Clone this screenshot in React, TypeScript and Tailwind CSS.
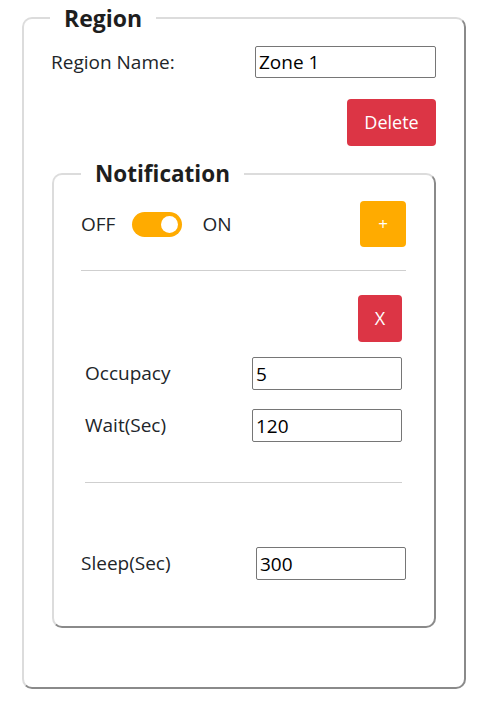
import { useState } from "react";

const font = { fontFamily: '"Open Sans", "Noto Sans", sans-serif' };

function TextBox({ value, className }: { value: string; className: string }) {
  return (
    <input
      defaultValue={value}
      className={`rounded-[2px] border border-[#767676] bg-white px-[3px] text-[19px] text-black outline-none ${className}`}
    />
  );
}

function Toggle() {
  const [on, setOn] = useState(true);
  return (
    <button
      onClick={() => setOn(!on)}
      className={`flex h-[25px] w-[50px] items-center rounded-full px-[4px] ${
        on ? "justify-end bg-[#ffab00]" : "justify-start bg-[#ccc]"
      }`}
    >
      <span className="h-[17px] w-[17px] rounded-full bg-white" />
    </button>
  );
}

export default function App() {
  return (
    <div className="min-h-[706px] bg-white text-[#212529]" style={font}>
      <fieldset className="ml-[22px] w-[444px] rounded-[10px] border-2 border-t-[#dcdcdc] border-l-[#dcdcdc] border-r-[#8a8a8a] border-b-[#8a8a8a] pl-[27px] pr-[28px] pb-[59px]">
        <legend className="-ml-px px-[14px] text-[23px] font-bold leading-[36px] text-[#1e1e1e]">
          Region
        </legend>
        <div className="mt-[10px] flex items-center justify-between">
          <span className="text-[19px]">Region Name:</span>
          <TextBox value="Zone 1" className="h-[32px] w-[181px]" />
        </div>
        <div className="mt-[21px] flex justify-end">
          <button className="h-[47px] w-[89px] rounded-[4px] bg-[#dc3545] text-[18px] text-white">
            Delete
          </button>
        </div>

        <fieldset className="mt-[10px] ml-[1px] rounded-[10px] border-2 border-t-[#dcdcdc] border-l-[#dcdcdc] border-r-[#8a8a8a] border-b-[#8a8a8a] pl-[27px] pr-[28px] pb-[46px]">
          <legend className="px-[14px] text-[22.5px] font-bold leading-[36px] text-[#1e1e1e]">
            Notification
          </legend>
          <div className="mt-[9px] flex items-center justify-between">
            <div className="flex items-center text-[19px]">
              <span>OFF</span>
              <span className="ml-[17px] mr-[20px] flex">
                <Toggle />
              </span>
              <span>ON</span>
            </div>
            <button className="h-[46px] w-[46px] rounded-[4px] bg-[#ffab00] text-[17px] text-white">
              +
            </button>
          </div>
          <hr className="mt-[23px] border-t border-[#cfcfcf]" />

          <div className="mx-[4px]">
            <div className="mt-[24px] flex justify-end">
              <button className="h-[47px] w-[44px] rounded-[4px] bg-[#dc3545] text-[18px] text-white">
                X
              </button>
            </div>
            <div className="mt-[15px] flex items-center justify-between">
              <span className="text-[19px]">Occupacy</span>
              <TextBox value="5" className="h-[33px] w-[150px]" />
            </div>
            <div className="mt-[19px] flex items-center justify-between">
              <span className="text-[19px]">Wait(Sec)</span>
              <TextBox value="120" className="h-[33px] w-[150px]" />
            </div>
            <hr className="mt-[40px] border-t border-[#cfcfcf]" />
          </div>

          <div className="mt-[64px] flex items-center justify-between">
            <span className="text-[19px]">Sleep(Sec)</span>
            <TextBox value="300" className="h-[33px] w-[150px]" />
          </div>
        </fieldset>
      </fieldset>
    </div>
  );
}
